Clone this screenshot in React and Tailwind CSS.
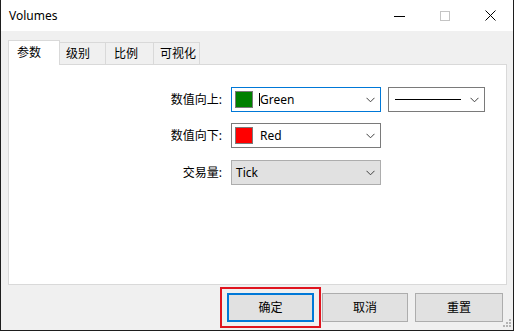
import React from "react";

const font = { fontFamily: '"Noto Sans", "Noto Sans CJK SC", sans-serif' };

function Chevron() {
  return (
    <svg width="9" height="6" viewBox="0 0 9 6" className="shrink-0">
      <path d="M0.5 0.8 L4.5 4.8 L8.5 0.8" fill="none" stroke="#404040" strokeWidth="1" />
    </svg>
  );
}

function Combo({ border, bg = "bg-white", children, width = "w-[150px]" }) {
  return (
    <div className={`${width} h-[25px] border ${border} ${bg} flex items-center pl-[3px] pr-[5px]`}>
      <div className="flex-1 flex items-center min-w-0">{children}</div>
      <Chevron />
    </div>
  );
}

function Row({ label, children }) {
  return (
    <div className="flex items-center h-[25px]">
      <div className="w-[214px] text-right text-[12px] text-black pr-[1px]">{label}</div>
      <div className="ml-[8px] flex items-center gap-[7px]">{children}</div>
    </div>
  );
}

export default function App() {
  return (
    <div
      className="w-[514px] h-[331px] flex flex-col bg-[#f0f0f0] border-l border-r border-b border-[#1e1e1e] overflow-hidden"
      style={font}
    >
      {/* Title bar */}
      <div className="h-[31px] bg-white flex items-center shrink-0">
        <div className="pl-[8px] text-[12px] text-black flex-1 leading-none">Volumes</div>
        <div className="flex items-center h-full">
          <div className="w-[46px] h-full flex items-center justify-center">
            <div className="w-[11px] h-px bg-black mt-[1px]" />
          </div>
          <div className="w-[46px] h-full flex items-center justify-center">
            <div className="w-[10px] h-[10px] border border-[#c4c4c4]" />
          </div>
          <div className="w-[45px] h-full flex items-center justify-center">
            <svg width="11" height="11" viewBox="0 0 11 11">
              <path d="M0.5 0.5 L10.5 10.5 M10.5 0.5 L0.5 10.5" stroke="#000" strokeWidth="1" />
            </svg>
          </div>
        </div>
      </div>

      {/* Body */}
      <div className="flex-1 flex flex-col pl-[7px] pr-[6px] pt-[9px] relative">
        {/* Tabs */}
        <div className="flex items-end h-[24px] relative z-10 text-[12px] text-black">
          <div className="w-[52px] h-[25px] bg-white border border-[#d9d9d9] border-b-0 flex items-start pt-[3px] pl-[8px] -mb-px">
            参数
          </div>
          <div className="w-[46px] h-[22px] border border-[#d9d9d9] border-l-0 border-b-0 flex items-center pl-[6px]">级别</div>
          <div className="w-[48px] h-[22px] border border-[#d9d9d9] border-l-0 border-b-0 flex items-center pl-[8px]">比例</div>
          <div className="w-[46px] h-[22px] border border-[#d9d9d9] border-l-0 border-b-0 flex items-center pl-[6px]">可视化</div>
        </div>

        {/* Panel */}
        <div className="h-[221px] bg-white border border-[#d9d9d9] flex flex-col pt-[22px] gap-[11px]">
          <Row label="数值向上:">
            <Combo border="border-[#0078d7]">
              <div className="w-[18px] h-[17px] bg-[#008000] border border-[#7a7a7a]" />
              <div className="w-px h-[13px] bg-black ml-[6px]" />
              <span className="text-[12px] text-black">Green</span>
            </Combo>
            <div className="w-[97px] h-[25px] border border-[#7a7a7a] bg-white flex items-center pl-[6px] pr-[5px]">
              <div className="w-[66px] h-px bg-black" />
              <div className="flex-1" />
              <Chevron />
            </div>
          </Row>
          <Row label="数值向下:">
            <Combo border="border-[#7a7a7a]">
              <div className="w-[18px] h-[17px] bg-[#ff0000] border border-[#7a7a7a]" />
              <span className="text-[12px] text-black ml-[7px]">Red</span>
            </Combo>
          </Row>
          <div className="mt-[1px]">
            <Row label="交易量:">
              <Combo border="border-[#adadad]" bg="bg-[#e1e1e1]">
                <span className="text-[12px] text-black ml-[1px]">Tick</span>
              </Combo>
            </Row>
          </div>
        </div>

        {/* Buttons */}
        <div className="flex justify-end pt-[8px] pr-[4px] gap-[7px] text-[12px] text-black">
          <div className="relative">
            <div className="w-[87px] h-[29px] bg-[#e1e1e1] border-2 border-[#0078d7] flex items-center justify-center">
              确定
            </div>
            <div className="absolute left-[-7px] right-[-7px] top-[-6px] bottom-[-6px] border-2 border-[#e0141e] pointer-events-none" />
          </div>
          <div className="w-[86px] h-[29px] bg-[#e1e1e1] border border-[#adadad] flex items-center justify-center ml-[1px]">
            取消
          </div>
          <div className="w-[88px] h-[29px] bg-[#e1e1e1] border border-[#adadad] flex items-center justify-center">
            重置
          </div>
        </div>

        {/* Resize grip */}
        <svg width="10" height="10" viewBox="0 0 10 10" className="absolute right-[1px] bottom-[1px]">
          <rect x="7" y="0" width="2" height="2" fill="#b4b4b4" />
          <rect x="4" y="3" width="2" height="2" fill="#b4b4b4" />
          <rect x="7" y="3" width="2" height="2" fill="#b4b4b4" />
          <rect x="1" y="6" width="2" height="2" fill="#b4b4b4" />
          <rect x="4" y="6" width="2" height="2" fill="#b4b4b4" />
          <rect x="7" y="6" width="2" height="2" fill="#b4b4b4" />
        </svg>
      </div>
    </div>
  );
}
